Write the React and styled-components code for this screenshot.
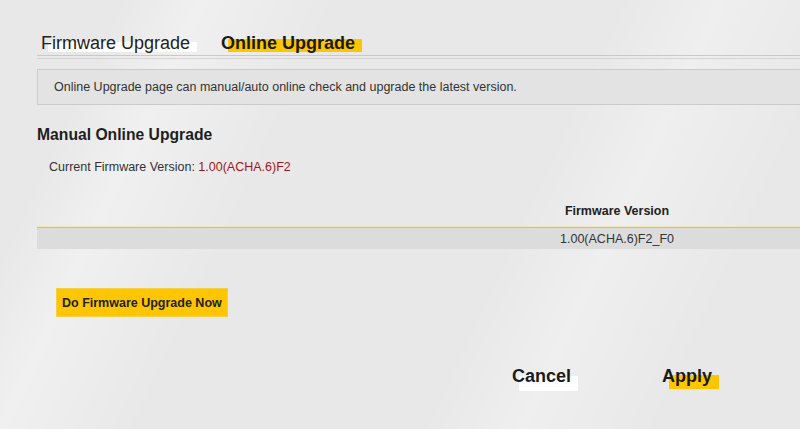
import React from "react";
import styled, { createGlobalStyle, css } from "styled-components";

const Global = createGlobalStyle`
  html, body {
    margin: 0;
    padding: 0;
    width: 800px;
    height: 429px;
    overflow: hidden;
    font-family: "Liberation Sans", Arial, sans-serif;
    color: #222;
  }
  body {
    background:
      linear-gradient(115deg, rgba(255,255,255,0) 0%, rgba(255,255,255,0) 12%, rgba(255,255,255,0.35) 20%, rgba(255,255,255,0) 34%, rgba(255,255,255,0) 62%, rgba(255,255,255,0.3) 72%, rgba(255,255,255,0) 86%),
      #e8e8e8;
  }
`;

const Page = styled.div`
  padding: 33px 0 0 37px;
  display: flex;
  flex-direction: column;
`;

/* text with a marker stroke offset behind its lower half */
const marker = css`
  position: relative;
  z-index: 0;
  &::before {
    content: "";
    position: absolute;
    z-index: -1;
    left: 7px;
    right: -7px;
    top: ${(p) => p.$top || "50%"};
    bottom: ${(p) => p.$bottom || "0"};
    background: ${(p) => p.$mark};
  }
`;

const TabBar = styled.div`
  display: flex;
  align-items: flex-end;
  gap: 31px;
  padding: 0 0 2px 4px;
  border-bottom: 1px solid #c9c9c9;
  position: relative;
  &::after {
    content: "";
    position: absolute;
    left: 0;
    right: 0;
    bottom: -4px;
    height: 1px;
    background: #d4d4d4;
  }
`;

const Tab = styled.span`
  ${marker}
  font-size: 18px;
  line-height: 20px;
  font-weight: ${(p) => (p.$active ? 700 : 400)};
  color: ${(p) => (p.$active ? "#1a1a1a" : "#222")};
  cursor: pointer;
`;

const InfoBox = styled.div`
  margin-top: 13px;
  height: 34px;
  display: flex;
  align-items: center;
  padding-left: 16px;
  background: #e3e3e3;
  border: 1px solid #cbcbcb;
  border-right: none;
  font-size: 12.5px;
  color: #333;
`;

const Heading = styled.h3`
  margin: 21px 0 0;
  font-size: 15.7px;
  line-height: 18px;
  font-weight: 700;
  color: #1e1e1e;
`;

const FieldRow = styled.div`
  margin: 16px 0 0 12px;
  font-size: 12.5px;
  line-height: 14px;
  color: #333;
`;

const Value = styled.span`
  color: #a3161b;
`;

const Table = styled.div`
  margin-top: 20px;
  display: grid;
  grid-template-columns: 397px 366px;
  font-size: 12.5px;
`;

const HeadCell = styled.div`
  height: 33px;
  display: flex;
  align-items: center;
  justify-content: center;
  font-weight: 700;
  color: #222;
  border-bottom: 1px solid #f3c20f;
  box-shadow: 0 -1px 0 #f1e6b8 inset;
`;

const Cell = styled.div`
  height: 21px;
  display: flex;
  align-items: center;
  justify-content: center;
  background: #dcdcdc;
  color: #333;
`;

const UpgradeButton = styled.button`
  align-self: flex-start;
  margin: 39px 0 0 19px;
  height: 29px;
  padding: 0 5px;
  border: 1px solid #f4cf4a;
  background: #ffc600;
  font-family: "Liberation Sans", Arial, sans-serif;
  font-size: 12.5px;
  font-weight: 700;
  color: #222;
  cursor: pointer;
`;

const Actions = styled.div`
  margin-top: 49px;
  display: flex;
  gap: 91px;
  padding-left: 475px;
`;

const ActionText = styled.span`
  ${marker}
  font-size: 18px;
  line-height: 20px;
  font-weight: 700;
  color: #1a1a1a;
  cursor: pointer;
`;

export default function App() {
  return (
    <>
      <Global />
      <Page>
        <TabBar>
          <Tab $mark="#ffffff" $top="9px" $bottom="1px">Firmware Upgrade</Tab>
          <Tab $active $mark="#ffc600" $top="6px" $bottom="1px">Online Upgrade</Tab>
        </TabBar>
        <InfoBox>
          Online Upgrade page can manual/auto online check and upgrade the latest version.
        </InfoBox>
        <Heading>Manual Online Upgrade</Heading>
        <FieldRow>
          Current Firmware Version: <Value>1.00(ACHA.6)F2</Value>
        </FieldRow>
        <Table>
          <HeadCell />
          <HeadCell>Firmware Version</HeadCell>
          <Cell />
          <Cell>1.00(ACHA.6)F2_F0</Cell>
        </Table>
        <UpgradeButton>Do Firmware Upgrade Now</UpgradeButton>
        <Actions>
          <ActionText $mark="#ffffff" $top="10px" $bottom="-5px">Cancel</ActionText>
          <ActionText $mark="#ffc600" $top="9px" $bottom="-3px">Apply</ActionText>
        </Actions>
      </Page>
    </>
  );
}
